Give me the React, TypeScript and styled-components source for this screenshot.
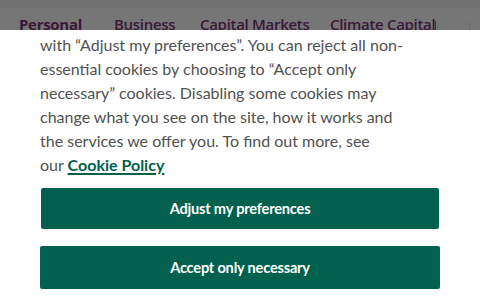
import React from "react";
import styled, { createGlobalStyle } from "styled-components";

const Global = createGlobalStyle`
  html, body { margin: 0; padding: 0; }
  body { width: 480px; height: 300px; overflow: hidden; background: #fff; }
`;

const Page = styled.div`
  width: 480px;
  height: 300px;
  display: flex;
  flex-direction: column;
  overflow: hidden;
`;

const Backdrop = styled.div`
  height: 30px;
  flex: none;
  background: #767676;
  display: flex;
  flex-direction: column;
  overflow: hidden;
`;

const TopStrip = styled.div`
  height: 8px;
  flex: none;
  background: #717171;
`;

const Nav = styled.nav`
  flex: none;
  height: 22px;
  display: flex;
  align-items: flex-start;
  padding: 5px 0 0 19px;
`;

const NavItem = styled.span<{ $w: number; $active?: boolean }>`
  width: ${(p) => p.$w}px;
  font-family: "Open Sans", sans-serif;
  font-size: 15px;
  font-weight: ${(p) => (p.$active ? 700 : 600)};
  color: #3a1838;
  line-height: 22px;
  white-space: nowrap;
  letter-spacing: -0.3px;
`;

const Caret = styled.span`
  width: 1px;
  height: 13px;
  margin-top: 8px;
  background: #4a2a48;
`;

const Divider = styled.span`
  width: 1px;
  height: 12px;
  margin-left: 33px;
  margin-top: 9px;
  background: #686868;
`;

const Modal = styled.section`
  flex: 1;
  background: #fff;
  padding: 3px 40px 0 40px;
  display: flex;
  flex-direction: column;
`;

const Body = styled.p`
  margin: 0;
  font-family: "Lato", sans-serif;
  font-size: 16px;
  line-height: 24px;
  color: #515151;
  white-space: nowrap;
`;

const PolicyLink = styled.a`
  color: #00604c;
  font-weight: 700;
  text-decoration: underline;
  text-underline-offset: 2px;
  text-decoration-thickness: 2px;
`;

const Actions = styled.div`
  margin-top: 11px;
  display: flex;
  flex-direction: column;
  gap: 17px;
`;

const Button = styled.button<{ $inset?: boolean }>`
  height: ${(p) => (p.$inset ? 41 : 43)}px;
  margin: 0 ${(p) => (p.$inset ? 1 : 0)}px;
  padding: 0 0 1px;
  border: none;
  border-radius: 2px;
  background: #01614e;
  color: #fff;
  font-family: "Lato", sans-serif;
  font-weight: 700;
  font-size: 14.6px;
  letter-spacing: -0.2px;
  cursor: pointer;
`;

export default function App() {
  return (
    <Page>
      <Global />
      <Backdrop>
        <TopStrip />
        <Nav>
          <NavItem $w={95} $active>Personal</NavItem>
          <NavItem $w={86}>Business</NavItem>
          <NavItem $w={130}>Capital Markets</NavItem>
          <NavItem $w={105}>Climate Capital</NavItem>
          <Caret />
          <Divider />
        </Nav>
      </Backdrop>
      <Modal>
        <Body>
          with “Adjust my preferences”. You can reject all non-
          <br />
          essential cookies by choosing to “Accept only
          <br />
          necessary” cookies. Disabling some cookies may
          <br />
          change what you see on the site, how it works and
          <br />
          the services we offer you. To find out more, see
          <br />
          our <PolicyLink href="#">Cookie Policy</PolicyLink>
        </Body>
        <Actions>
          <Button $inset>Adjust my preferences</Button>
          <Button>Accept only necessary</Button>
        </Actions>
      </Modal>
    </Page>
  );
}
